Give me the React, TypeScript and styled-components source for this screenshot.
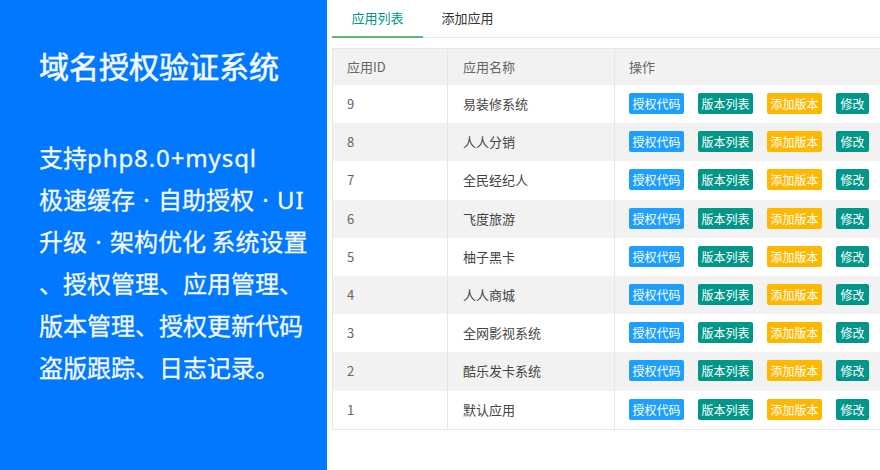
import React from 'react';
import styled, { createGlobalStyle } from 'styled-components';

type Tone = 'blue' | 'green' | 'yellow';

const apps = [
  { id: 9, name: '易装修系统' },
  { id: 8, name: '人人分销' },
  { id: 7, name: '全民经纪人' },
  { id: 6, name: '飞度旅游' },
  { id: 5, name: '柚子黑卡' },
  { id: 4, name: '人人商城' },
  { id: 3, name: '全网影视系统' },
  { id: 2, name: '酷乐发卡系统' },
  { id: 1, name: '默认应用' },
];

const tones: Record<Tone, string> = {
  blue: '#1e9fff',
  green: '#009688',
  yellow: '#ffb800',
};

const App: React.FC = () => (
  <Page>
    <GlobalStyle />
    <Intro>
      <Title>域名授权验证系统</Title>
      <Features>
        <Feature>
          支持<Latin>php8.0+mysql</Latin>
        </Feature>
        <Feature>
          极速缓存<Dot>·</Dot>自助授权<Dot>·</Dot>
          <Latin>UI</Latin>
        </Feature>
        <Feature>
          升级<Dot>·</Dot>架构优化 系统设置
        </Feature>
        <Feature>、授权管理、应用管理、</Feature>
        <Feature>版本管理、授权更新代码</Feature>
        <Feature>盗版跟踪、日志记录。</Feature>
      </Features>
    </Intro>
    <Main>
      <Tabs>
        <Tab active>应用列表</Tab>
        <Tab>添加应用</Tab>
      </Tabs>
      <Table>
        <Row header>
          <Cell>应用ID</Cell>
          <Cell>应用名称</Cell>
          <Cell>操作</Cell>
        </Row>
        {apps.map((app, index) => (
          <Row key={app.id} striped={index % 2 === 1}>
            <Cell>{app.id}</Cell>
            <Cell dark>{app.name}</Cell>
            <Actions>
              <ActionButton tone="blue">授权代码</ActionButton>
              <ActionButton tone="green">版本列表</ActionButton>
              <ActionButton tone="yellow">添加版本</ActionButton>
              <ActionButton tone="green">修改</ActionButton>
            </Actions>
          </Row>
        ))}
      </Table>
    </Main>
  </Page>
);

const GlobalStyle = createGlobalStyle`
  html, body {
    margin: 0;
    padding: 0;
    background: #fff;
    overflow: hidden;
  }
  body {
    font-family: "Noto Sans CJK SC", "Noto Sans", sans-serif;
  }
`;

const Page = styled.div`
  display: flex;
  width: 880px;
  height: 470px;
  overflow: hidden;
`;

const Intro = styled.aside`
  flex: 0 0 327px;
  box-sizing: border-box;
  padding: 43px 0 0 39px;
  background: #0078ff;
  color: #f4f8ff;
`;

const Title = styled.h1`
  margin: 0;
  font-size: 30px;
  font-weight: 400;
  line-height: 44px;
  -webkit-text-stroke: 0.6px #f4f8ff;
`;

const Features = styled.div`
  margin-top: 49px;
  white-space: nowrap;
`;

const Feature = styled.div`
  height: 42px;
  font-size: 24px;
  font-weight: 400;
  line-height: 42px;
  -webkit-text-stroke: 0.3px #f4f8ff;
`;

const Latin = styled.span`
  font-family: "Noto Sans", sans-serif;
  letter-spacing: 0.9px;
`;

const Dot = styled.span`
  display: inline-block;
  width: 23px;
  font-family: "Noto Sans", sans-serif;
  text-align: center;
`;

const Main = styled.main`
  flex: 1;
  min-width: 0;
  padding-left: 5px;
`;

const Tabs = styled.div`
  display: flex;
  height: 37px;
  border-bottom: 1px solid #e6e6e6;
`;

const Tab = styled.div<{ active?: boolean }>`
  box-sizing: border-box;
  width: 91px;
  height: 38px;
  font-size: 13px;
  line-height: 36px;
  text-align: center;
  color: ${({ active }) => (active ? '#009688' : '#333')};
  border-bottom: 2px solid ${({ active }) => (active ? '#5fb878' : 'transparent')};
  & + & {
    margin-left: -1px;
  }
`;

const Table = styled.div`
  margin-top: 10px;
  width: 560px;
  border: solid #e6e6e6;
  border-width: 1px 0 0 1px;
`;

const Row = styled.div<{ header?: boolean; striped?: boolean }>`
  display: grid;
  grid-template-columns: 115px 167px 1fr;
  box-sizing: border-box;
  height: ${({ header }) => (header ? '36px' : '38.2px')};
  background: ${({ header, striped }) => (header || striped ? '#f2f2f2' : '#fff')};
  &:last-child {
    height: 39.2px;
    border-bottom: 1px solid #e6e6e6;
  }
`;

const Cell = styled.div<{ dark?: boolean }>`
  display: flex;
  align-items: center;
  box-sizing: border-box;
  padding: 0 0 1px 14px;
  border-right: 1px solid #e6e6e6;
  font-size: 13px;
  color: ${({ dark }) => (dark ? '#444' : '#666')};
  & + & {
    padding-left: 15px;
  }
  & + & + & {
    padding-left: 14px;
  }
`;

const Actions = styled.div`
  display: flex;
  align-items: center;
  gap: 14px;
  padding: 0 0 1px 14px;
`;

const ActionButton = styled.span<{ tone: Tone }>`
  box-sizing: border-box;
  min-width: 33px;
  height: 21px;
  padding: 0 3.5px;
  border-radius: 2px;
  background: ${({ tone }) => tones[tone]};
  color: #fff;
  font-size: 12px;
  line-height: 21px;
  text-align: center;
  white-space: nowrap;
`;

export default App;
